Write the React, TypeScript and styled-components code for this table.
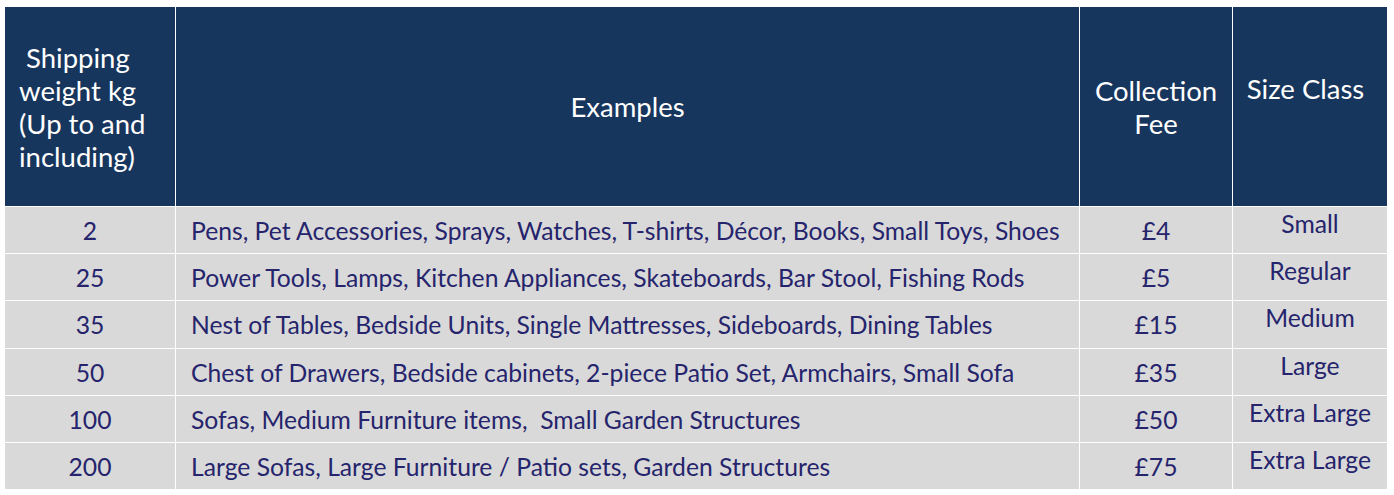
import React from 'react';
import styled, { createGlobalStyle } from 'styled-components';

const GlobalStyle = createGlobalStyle`
    html, body {
        margin: 0;
        padding: 0;
        background: #ffffff;
    }
    body {
        font-family: Lato, "Open Sans", sans-serif;
    }
`;

const Page = styled.div`
    padding: 7px 7px 0 5px;
`;

const Grid = styled.div`
    display: grid;
    grid-template-columns: 170px 903px 152px 154px;
    grid-template-rows: 199px 46px 46px 47px 46px 46px 46px;
    gap: 1px;
    background: #ffffff;
    width: 1382px;
`;

const HeadCell = styled.div<{ $align?: 'left' | 'center'; $lift?: number; $nudge?: number }>`
    background: #17365d;
    color: #ffffff;
    font-size: 27.5px;
    line-height: 33px;
    display: flex;
    align-items: center;
    justify-content: ${p => (p.$align === 'left' ? 'flex-start' : 'center')};
    text-align: ${p => p.$align ?? 'center'};
    padding-left: ${p => (p.$align === 'left' ? '14px' : '0')};
    padding-right: ${p => p.$nudge ?? 0}px;
    padding-bottom: ${p => p.$lift ?? 0}px;
    white-space: pre;
`;

const Cell = styled.div<{ $align?: 'left' | 'center'; $lift?: number }>`
    background: #d9d9d9;
    color: #25246c;
    font-size: 24.7px;
    display: flex;
    align-items: center;
    justify-content: ${p => (p.$align === 'left' ? 'flex-start' : 'center')};
    padding-left: ${p => (p.$align === 'left' ? '15px' : '0')};
    padding-bottom: ${p => p.$lift ?? 0}px;
    white-space: pre;
`;

type Row = {
    weight: string;
    examples: string;
    fee: string;
    size: string;
};

const rows: Row[] = [
    { weight: '2', examples: 'Pens, Pet Accessories, Sprays, Watches, T-shirts, Décor, Books, Small Toys, Shoes', fee: '£4', size: 'Small' },
    { weight: '25', examples: 'Power Tools, Lamps, Kitchen Appliances, Skateboards, Bar Stool, Fishing Rods', fee: '£5', size: 'Regular' },
    { weight: '35', examples: 'Nest of Tables, Bedside Units, Single Mattresses, Sideboards, Dining Tables', fee: '£15', size: 'Medium' },
    { weight: '50', examples: 'Chest of Drawers, Bedside cabinets, 2-piece Patio Set, Armchairs, Small Sofa', fee: '£35', size: 'Large' },
    { weight: '100', examples: 'Sofas, Medium Furniture items,  Small Garden Structures', fee: '£50', size: 'Extra Large' },
    { weight: '200', examples: 'Large Sofas, Large Furniture / Patio sets, Garden Structures', fee: '£75', size: 'Extra Large' },
];

export default function App() {
    return (
        <Page>
            <GlobalStyle />
            <Grid>
                <HeadCell $align="left">{' Shipping\nweight kg\n(Up to and\nincluding)'}</HeadCell>
                <HeadCell>Examples</HeadCell>
                <HeadCell>{'Collection\nFee'}</HeadCell>
                <HeadCell $lift={36} $nudge={9}>Size Class</HeadCell>
                {rows.map(row => (
                    <React.Fragment key={row.weight}>
                        <Cell>{row.weight}</Cell>
                        <Cell $align="left">{row.examples}</Cell>
                        <Cell>{row.fee}</Cell>
                        <Cell $lift={14}>{row.size}</Cell>
                    </React.Fragment>
                ))}
            </Grid>
        </Page>
    );
}
